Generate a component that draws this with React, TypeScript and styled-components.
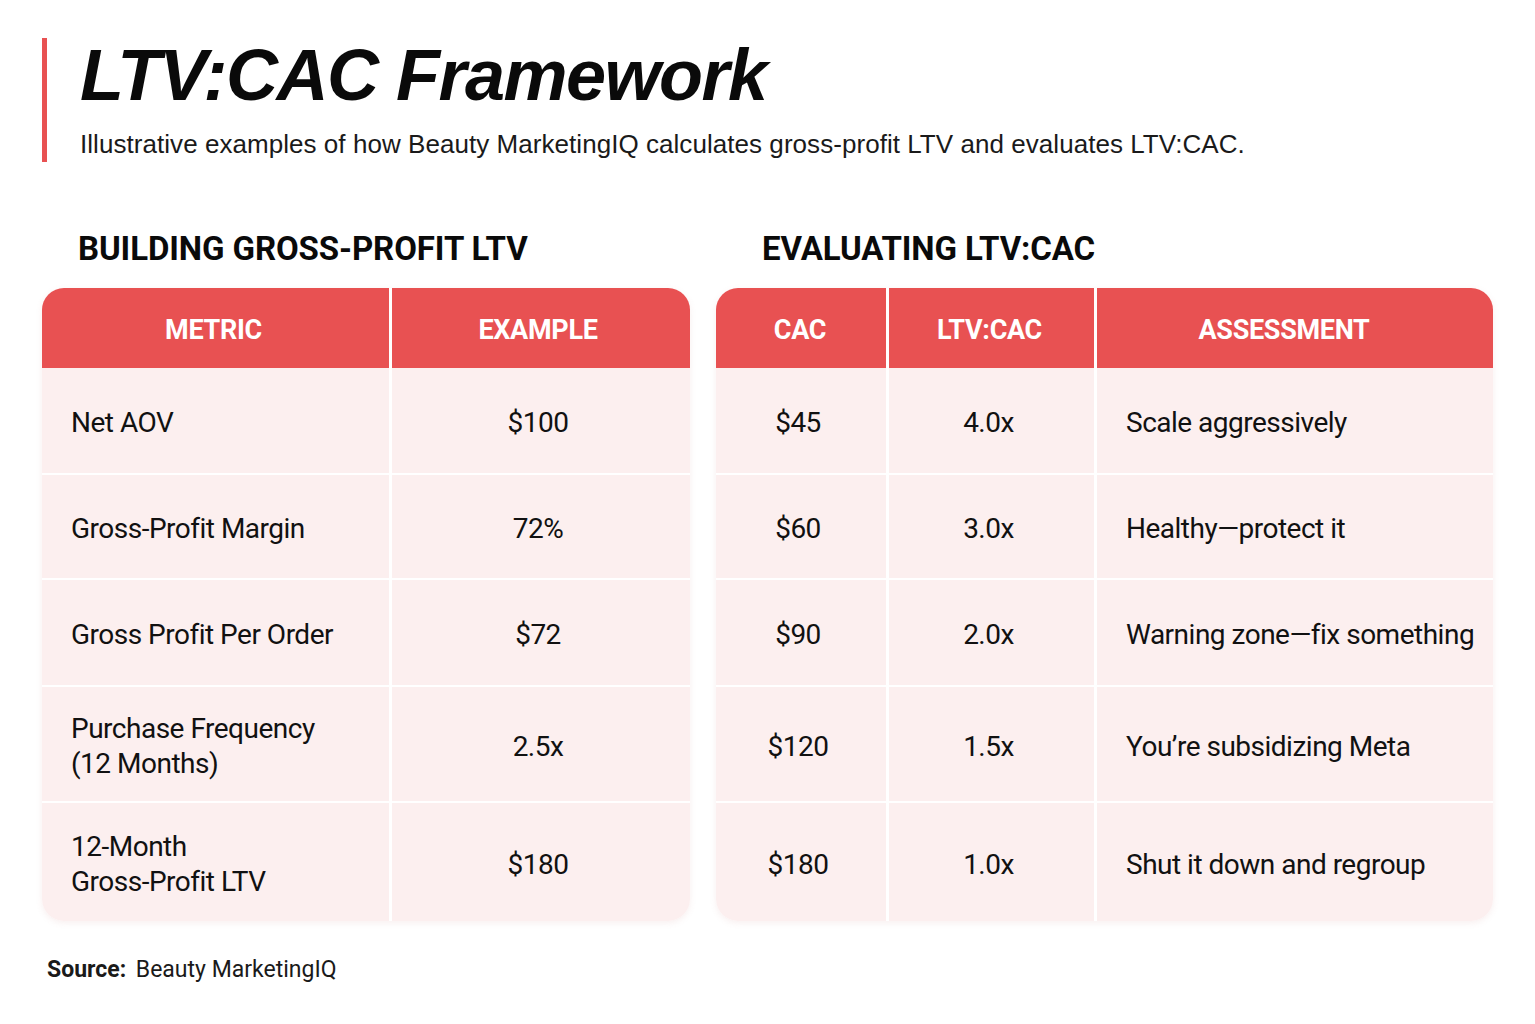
import React from 'react'
import styled, { createGlobalStyle } from 'styled-components'

const RED = '#E85152'
const ROW_BG = '#FCEFEF'

const GlobalStyle = createGlobalStyle`
    html, body {
        margin: 0;
        padding: 0;
        background: #ffffff;
    }
    body {
        font-family: Roboto, "Liberation Sans", Arial, sans-serif;
        color: #111111;
    }
`

interface IColumn {
    label: string
    width: string
    align: 'left' | 'center'
    headInset: number
}

interface ITableProps {
    columns: IColumn[]
    rows: string[][]
    rowHeights: number[]
}

const leftColumns: IColumn[] = [
    { label: 'METRIC', width: '347px', align: 'left', headInset: 4 },
    { label: 'EXAMPLE', width: '1fr', align: 'center', headInset: 6 },
]

const leftRows = [
    ['Net AOV', '$100'],
    ['Gross-Profit Margin', '72%'],
    ['Gross Profit Per Order', '$72'],
    ['Purchase Frequency\n(12 Months)', '2.5x'],
    ['12-Month\nGross-Profit LTV', '$180'],
]

const rightColumns: IColumn[] = [
    { label: 'CAC', width: '170px', align: 'center', headInset: 2 },
    { label: 'LTV:CAC', width: '205px', align: 'center', headInset: 4 },
    { label: 'ASSESSMENT', width: '1fr', align: 'left', headInset: 22 },
]

const rightRows = [
    ['$45', '4.0x', 'Scale aggressively'],
    ['$60', '3.0x', 'Healthy\u2014protect it'],
    ['$90', '2.0x', 'Warning zone\u2014fix something'],
    ['$120', '1.5x', 'You\u2019re subsidizing Meta'],
    ['$180', '1.0x', 'Shut it down and regroup'],
]

const rowHeights = [105, 103, 105, 114, 118]

function DataTable({ columns, rows, rowHeights }: ITableProps) {
    const template = columns.map(c => c.width).join(' ')
    const heights = ['78px', ...rowHeights.map(h => `${h}px`)].join(' ')

    return <TableGrid style={{ gridTemplateColumns: template, gridTemplateRows: heights }}>
        {columns.map(col => <HeadCell key={col.label} inset={col.headInset}>{col.label}</HeadCell>)}
        {rows.map((row, r) => row.map((value, c) =>
            <BodyCell key={`${r}-${c}`} align={columns[c].align}>{value}</BodyCell>
        ))}
    </TableGrid>
}

export default function App() {
    return <Page>
        <GlobalStyle />
        <TitleBlock>
            <Title>LTV:CAC Framework</Title>
            <Subtitle>Illustrative examples of how Beauty MarketingIQ calculates gross-profit LTV and evaluates LTV:CAC.</Subtitle>
        </TitleBlock>

        <Tables>
            <Section width='648px'>
                <SectionTitle indent='36px'>BUILDING GROSS-PROFIT LTV</SectionTitle>
                <DataTable columns={leftColumns} rows={leftRows} rowHeights={rowHeights} />
            </Section>
            <Section width='777px'>
                <SectionTitle indent='46px'>EVALUATING LTV:CAC</SectionTitle>
                <DataTable columns={rightColumns} rows={rightRows} rowHeights={rowHeights} />
            </Section>
        </Tables>

        <Source><strong>Source:</strong> Beauty MarketingIQ</Source>
    </Page>
}

const Page = styled.div`
    width: 1535px;
    height: 1024px;
    box-sizing: border-box;
    padding: 38px 0 0 42px;
    overflow: hidden;
`

const TitleBlock = styled.div`
    border-left: 5px solid ${RED};
    padding-left: 33px;
    height: 124px;
    box-sizing: border-box;
`

const Title = styled.h1`
    margin: 0;
    font-family: "Liberation Sans", Arial, sans-serif;
    font-style: italic;
    font-weight: 700;
    font-size: 72px;
    line-height: 74px;
    letter-spacing: -1.5px;
    color: #0a0a0a;
`

const Subtitle = styled.p`
    margin: 17px 0 0;
    font-family: "Liberation Sans", Arial, sans-serif;
    font-size: 26px;
    line-height: 30px;
    letter-spacing: 0.05px;
    color: #1a1a1a;
`

const Tables = styled.div`
    display: flex;
    gap: 26px;
    margin-top: 67px;
`

const Section = styled.section<{ width: string }>`
    width: ${p => p.width};
    display: flex;
    flex-direction: column;
`

const SectionTitle = styled.h2<{ indent: string }>`
    margin: 0 0 19px;
    padding-left: ${p => p.indent};
    font-family: Roboto, "Liberation Sans", Arial, sans-serif;
    font-weight: 700;
    font-size: 33px;
    line-height: 40px;
    letter-spacing: -0.1px;
    color: #0a0a0a;
`

const TableGrid = styled.div`
    display: grid;
    column-gap: 3px;
    row-gap: 2px;
    background: #ffffff;
    border-radius: 22px;
    overflow: hidden;
    box-shadow: 0 2px 6px rgba(200, 120, 120, 0.12);
`

const HeadCell = styled.div<{ inset: number }>`
    background: ${RED};
    color: #ffffff;
    display: flex;
    align-items: center;
    justify-content: center;
    padding: 4px ${p => p.inset}px 0 0;
    font-weight: 700;
    font-size: 27px;
    letter-spacing: -0.3px;
    margin-bottom: -2px;
`

const BodyCell = styled.div<{ align: 'left' | 'center' }>`
    background: ${ROW_BG};
    display: flex;
    align-items: center;
    justify-content: ${p => p.align === 'center' ? 'center' : 'flex-start'};
    padding: ${p => p.align === 'center' ? '4px 6px 0 0' : '4px 0 0 29px'};
    white-space: pre;
    font-size: 28px;
    line-height: 35px;
    letter-spacing: -0.5px;
    color: #111111;
`

const Source = styled.div`
    margin-top: 35px;
    padding-left: 5px;
    font-size: 23px;
    color: #1a1a1a;

    strong {
        font-weight: 700;
        margin-right: 4px;
    }
`
